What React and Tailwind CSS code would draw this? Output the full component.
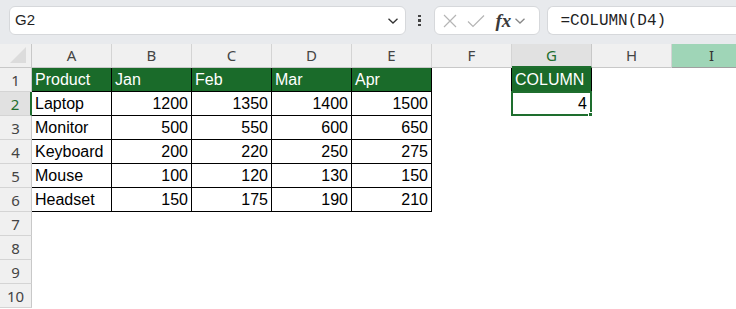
import React from "react";

const cols = ["A", "B", "C", "D", "E", "F", "G", "H", "I"];

const data = [
  ["Product", "Jan", "Feb", "Mar", "Apr"],
  ["Laptop", 1200, 1350, 1400, 1500],
  ["Monitor", 500, 550, 600, 650],
  ["Keyboard", 200, 220, 250, 275],
  ["Mouse", 100, 120, 130, 150],
  ["Headset", 150, 175, 190, 210],
];

const cellFont = { fontFamily: '"Liberation Sans", Arial, sans-serif' };
const uiFont = { fontFamily: '"Noto Sans", "Open Sans", sans-serif' };

function Chevron({ className }) {
  return (
    <svg width="12" height="8" viewBox="0 0 12 8" className={className}>
      <path d="M1.5 1.8 L6 6 L10.5 1.8" fill="none" stroke="currentColor" strokeWidth="1.3" />
    </svg>
  );
}

function TopBar() {
  return (
    <div className="flex h-[44px] items-start bg-[#e8eaed] pt-[6px]">
      {/* Name box */}
      <div className="ml-[9px] flex h-[29px] w-[397px] items-center justify-between rounded-[6px] border border-[#d6d8db] bg-white pl-[5px] pr-[6px]">
        <span className="text-[15px] text-[#1f1f1f]" style={cellFont}>
          G2
        </span>
        <Chevron className="text-[#333]" />
      </div>
      {/* dots */}
      <div className="ml-[12px] flex h-[29px] flex-col items-center justify-center gap-[2px]">
        <span className="block h-[2.5px] w-[2.5px] bg-[#444]" />
        <span className="block h-[2.5px] w-[2.5px] bg-[#444]" />
        <span className="block h-[2.5px] w-[2.5px] bg-[#444]" />
      </div>
      {/* fx box */}
      <div className="ml-[13px] flex h-[29px] w-[106px] items-center rounded-[6px] border border-[#d6d8db] bg-white pl-[8px]">
        <svg width="14" height="14" viewBox="0 0 14 14">
          <path d="M1 1 L13 13 M13 1 L1 13" stroke="#b5b5b5" strokeWidth="1.2" fill="none" />
        </svg>
        <svg width="18" height="14" viewBox="0 0 18 14" className="ml-[10px]">
          <path d="M1 7.5 L6 12.5 L17 1.5" stroke="#b5b5b5" strokeWidth="1.2" fill="none" />
        </svg>
        <span
          className="ml-[11px] text-[19px] font-semibold italic leading-none text-[#3a3a3a]"
          style={{ fontFamily: '"Liberation Serif", "Times New Roman", serif' }}
        >
          fx
        </span>
        <Chevron className="ml-[3px] text-[#888]" />
      </div>
      {/* formula box */}
      <div className="ml-[7px] flex h-[29px] flex-1 items-center rounded-l-[6px] border border-r-0 border-[#d6d8db] bg-white pl-[13px]">
        <span
          className="text-[16px] text-[#1f1f1f]"
          style={{ fontFamily: '"Liberation Mono", "DejaVu Sans Mono", monospace' }}
        >
          =COLUMN(D4)
        </span>
      </div>
    </div>
  );
}

function ColumnHeader() {
  return (
    <div className="flex h-[24px]">
      <div className="relative h-full w-[32px] shrink-0 border-r border-b border-[#c8c8c8] bg-[#f0f0f0]">
        <svg width="18" height="18" viewBox="0 0 18 18" className="absolute right-[4px] bottom-[3px]">
          <path d="M17 1 L17 17 L1 17 Z" fill="#dcdcdc" />
        </svg>
      </div>
      {cols.map((c) => {
        const sel = c === "G";
        const hov = c === "I";
        return (
          <div
            key={c}
            className={`flex h-full w-[80px] shrink-0 items-center justify-center border-r text-[15px] ${
              sel
                ? "border-r-[#c8c8c8] border-b-2 border-b-[#1e6e2e] bg-[#e1e1e1] text-[#1e6e2e]"
                : hov
                  ? "border-r-[#c8c8c8] border-b border-b-[#a0a0a0] bg-[#9fd5b7] text-[#333]"
                  : "border-r-[#d4d4d4] border-b border-b-[#c8c8c8] bg-[#f0f0f0] text-[#444]"
            }`}
            style={uiFont}
          >
            {c}
          </div>
        );
      })}
    </div>
  );
}

function Row({ idx }) {
  const rowData = data[idx - 1];
  const isHeader = idx === 1;
  const sel = idx === 2;
  return (
    <div className="flex h-[24px]">
      <div
        className={`flex h-full w-[32px] shrink-0 items-center justify-center border-b border-[#d4d4d4] pt-[1px] text-[15px] ${
          sel
            ? "border-r-2 border-r-[#1e6e2e] bg-[#e1e1e1] text-[#1e6e2e]"
            : "border-r border-r-[#c8c8c8] bg-[#f0f0f0] text-[#444]"
        }`}
        style={uiFont}
      >
        {idx}
      </div>
      {cols.map((c, ci) => {
        const inTable = rowData && ci < 5;
        const v = inTable ? rowData[ci] : null;
        const isNum = typeof v === "number";
        let cls = "border-r border-b border-transparent bg-white";
        if (inTable) {
          cls = isHeader
            ? "border-r border-b border-black bg-[#1a6b2a] text-white"
            : "border-r border-b border-black bg-white text-black";
        }
        if (c === "F" && idx === 1) cls = "border-r border-b border-r-black border-b-transparent bg-white";
        if (c === "G" && idx === 1) cls = "border-r border-b border-black bg-[#1a6b2a] text-white";
        return (
          <div
            key={c}
            className={`relative flex h-full w-[80px] shrink-0 items-center px-[3px] pt-[1px] text-[16px] ${cls} ${
              isNum ? "justify-end" : "justify-start"
            }`}
            style={cellFont}
          >
            {v}
            {c === "G" && idx === 1 && "COLUMN"}
            {c === "G" && idx === 2 && (
              <>
                <span className="ml-auto pr-[1px]">4</span>
                <div className="absolute -left-[1px] -top-[1px] h-[25px] w-[81px] border-2 border-[#1e6e2e]" />
                <div className="absolute -right-[4px] -bottom-[4px] h-[7px] w-[7px] border border-white bg-[#1e6e2e]" />
              </>
            )}
          </div>
        );
      })}
    </div>
  );
}

export default function App() {
  return (
    <div className="h-[309px] w-[736px] overflow-hidden bg-white">
      <TopBar />
      <ColumnHeader />
      {[1, 2, 3, 4, 5, 6, 7, 8, 9, 10].map((i) => (
        <Row key={i} idx={i} />
      ))}
    </div>
  );
}
